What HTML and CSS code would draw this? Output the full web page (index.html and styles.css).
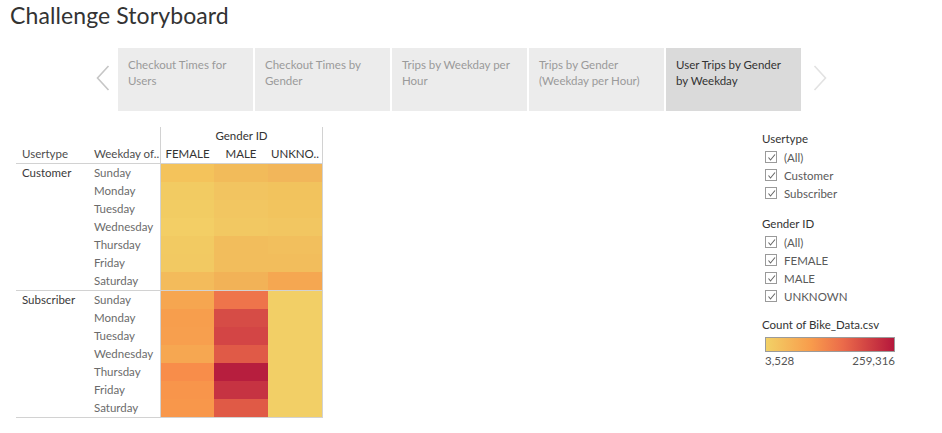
FILE: index.html
```html
<!DOCTYPE html>
<html>
<head>
<meta charset="utf-8">
<link rel="stylesheet" href="styles.css">
</head>
<body>
<h1 class="title">Challenge Storyboard</h1>
<div class="nav">
  <div class="arrow arrow-left">
    <svg width="14" height="26" viewBox="0 0 14 26"><polyline points="12.5,1 1.5,13 12.5,25" fill="none" stroke="#c6c6c6" stroke-width="1.6"/></svg>
  </div>
  <div class="tab">Checkout Times for Users</div>
  <div class="tab">Checkout Times by Gender</div>
  <div class="tab">Trips by Weekday per Hour</div>
  <div class="tab">Trips by Gender (Weekday per Hour)</div>
  <div class="tab active">User Trips by Gender by Weekday</div>
  <div class="arrow arrow-right">
    <svg width="14" height="26" viewBox="0 0 14 26"><polyline points="1.5,1 12.5,13 1.5,25" fill="none" stroke="#e2e2e2" stroke-width="1.6"/></svg>
  </div>
</div>
<div class="content">
  <div class="pivot">
    <div class="labels">
      <div class="lhead">
        <div class="lh lh-user">Usertype</div>
        <div class="lh lh-day">Weekday of..</div>
      </div>
      <div class="group">
        <div class="gname">Customer</div>
        <div class="days">
          <div class="day">Sunday</div><div class="day">Monday</div><div class="day">Tuesday</div><div class="day">Wednesday</div><div class="day">Thursday</div><div class="day">Friday</div><div class="day">Saturday</div>
        </div>
      </div>
      <div class="group">
        <div class="gname">Subscriber</div>
        <div class="days">
          <div class="day">Sunday</div><div class="day">Monday</div><div class="day">Tuesday</div><div class="day">Wednesday</div><div class="day">Thursday</div><div class="day">Friday</div><div class="day">Saturday</div>
        </div>
      </div>
    </div>
    <div class="heat">
      <div class="hhead">
        <div class="hh-title">Gender ID</div>
        <div class="hh-cols"><div class="hc">FEMALE</div><div class="hc">MALE</div><div class="hc">UNKNO..</div></div>
      </div>
      <div class="hgroup">
        <div class="hcol">
          <div class="cell" style="background:#f4c35b"></div>
          <div class="cell" style="background:#f2cb62"></div>
          <div class="cell" style="background:#f2cc63"></div>
          <div class="cell" style="background:#f3ce65"></div>
          <div class="cell" style="background:#f2ca62"></div>
          <div class="cell" style="background:#f2c962"></div>
          <div class="cell" style="background:#f3bb5b"></div>
        </div>
        <div class="hcol">
          <div class="cell" style="background:#f2bb5a"></div>
          <div class="cell" style="background:#f2c460"></div>
          <div class="cell" style="background:#f2c661"></div>
          <div class="cell" style="background:#f2c862"></div>
          <div class="cell" style="background:#f2bd5c"></div>
          <div class="cell" style="background:#f2bd5c"></div>
          <div class="cell" style="background:#f2b257"></div>
        </div>
        <div class="hcol">
          <div class="cell" style="background:#f2b65a"></div>
          <div class="cell" style="background:#f2c35d"></div>
          <div class="cell" style="background:#f2c45e"></div>
          <div class="cell" style="background:#f2c661"></div>
          <div class="cell" style="background:#f2bf5d"></div>
          <div class="cell" style="background:#f2bd5c"></div>
          <div class="cell" style="background:#f5a751"></div>
        </div>
      </div>
      <div class="hgroup">
        <div class="hcol">
          <div class="cell" style="background:#f6a650"></div>
          <div class="cell" style="background:#f79e4d"></div>
          <div class="cell" style="background:#f79f4e"></div>
          <div class="cell" style="background:#f6a751"></div>
          <div class="cell" style="background:#f88d4a"></div>
          <div class="cell" style="background:#f8954b"></div>
          <div class="cell" style="background:#f8974b"></div>
        </div>
        <div class="hcol">
          <div class="cell" style="background:#ee744b"></div>
          <div class="cell" style="background:#d64c46"></div>
          <div class="cell" style="background:#d34545"></div>
          <div class="cell" style="background:#e05a47"></div>
          <div class="cell" style="background:#b71e3e"></div>
          <div class="cell" style="background:#c63342"></div>
          <div class="cell" style="background:#e05a46"></div>
        </div>
        <div class="hcol">
          <div class="cell span7" style="background:#f2cf66"></div>
        </div>
      </div>
    </div>
  </div>
  <div class="legend">
    <div class="ltitle">Usertype</div>
    <div class="chk"><span class="box"><svg width="9" height="9" viewBox="0 0 9 9"><polyline points="1.5,4.5 3.5,7 8,1.5" fill="none" stroke="#666" stroke-width="1.1"/></svg></span>(All)</div>
    <div class="chk"><span class="box"><svg width="9" height="9" viewBox="0 0 9 9"><polyline points="1.5,4.5 3.5,7 8,1.5" fill="none" stroke="#666" stroke-width="1.1"/></svg></span>Customer</div>
    <div class="chk"><span class="box"><svg width="9" height="9" viewBox="0 0 9 9"><polyline points="1.5,4.5 3.5,7 8,1.5" fill="none" stroke="#666" stroke-width="1.1"/></svg></span>Subscriber</div>
    <div class="ltitle sec">Gender ID</div>
    <div class="chk"><span class="box"><svg width="9" height="9" viewBox="0 0 9 9"><polyline points="1.5,4.5 3.5,7 8,1.5" fill="none" stroke="#666" stroke-width="1.1"/></svg></span>(All)</div>
    <div class="chk"><span class="box"><svg width="9" height="9" viewBox="0 0 9 9"><polyline points="1.5,4.5 3.5,7 8,1.5" fill="none" stroke="#666" stroke-width="1.1"/></svg></span>FEMALE</div>
    <div class="chk"><span class="box"><svg width="9" height="9" viewBox="0 0 9 9"><polyline points="1.5,4.5 3.5,7 8,1.5" fill="none" stroke="#666" stroke-width="1.1"/></svg></span>MALE</div>
    <div class="chk"><span class="box"><svg width="9" height="9" viewBox="0 0 9 9"><polyline points="1.5,4.5 3.5,7 8,1.5" fill="none" stroke="#666" stroke-width="1.1"/></svg></span>UNKNOWN</div>
    <div class="ltitle sec2">Count of Bike_Data.csv</div>
    <div class="ramp"></div>
    <div class="ramp-labels"><span>3,528</span><span>259,316</span></div>
  </div>
</div>
</body>
</html>
```

FILE: styles.css
```css
* { box-sizing: border-box; }
html, body { margin: 0; padding: 0; background: #fff; }
body {
  font-family: Lato, "Open Sans", sans-serif;
  font-size: 11.5px;
  color: #333;
  width: 942px;
  height: 433px;
  overflow: hidden;
}
.title {
  margin: 0;
  height: 48px;
  padding-left: 10px;
  font-size: 23px;
  line-height: 31px;
  font-weight: normal;
  color: #333;
  letter-spacing: 0.1px;
}
.nav {
  display: flex;
  height: 63px;
  padding-left: 90px;
  gap: 2px;
}
.arrow {
  width: 26px;
  display: flex;
  align-items: center;
  justify-content: center;
  padding-bottom: 3px;
}
.arrow-right { width: 24px; justify-content: flex-end; }
.tab {
  width: 135px;
  background: #ececec;
  color: #9a9a9a;
  padding: 9px 10px 0 10px;
  line-height: 16px;
}
.tab.active { background: #dadada; color: #333; }

.content {
  display: flex;
  margin-top: 16px;
}
.pivot {
  display: flex;
  margin-left: 16px;
}
.labels { width: 144px; }
.lhead {
  height: 37px;
  border-bottom: 1px solid #d2d2d2;
  display: flex;
  align-items: flex-end;
}
.lh {
  height: 18px;
  line-height: 18px;
  padding-left: 6px;
  color: #4d4d4d;
  white-space: nowrap;
  overflow: hidden;
}
.lh-user { width: 72px; }
.lh-day { width: 72px; padding-right: 1px; }
.group {
  display: flex;
  border-bottom: 1px solid #d2d2d2;
}
.gname {
  width: 72px;
  padding-left: 6px;
  line-height: 18px;
  color: #3a3a3a;
}
.days { width: 72px; }
.day {
  height: 18px;
  line-height: 18px;
  padding-left: 6px;
  color: #6b6b6b;
  white-space: nowrap;
}
.heat {
  width: 163px;
  border-left: 1px solid #d2d2d2;
  border-right: 1px solid #d2d2d2;
}
.hhead {
  height: 37px;
  border-bottom: 1px solid #d2d2d2;
}
.hh-title {
  height: 18px;
  line-height: 18px;
  text-align: center;
  color: #333;
}
.hh-cols { display: flex; }
.hc {
  height: 18px;
  line-height: 18px;
  text-align: center;
  color: #333;
  width: 54px;
  white-space: nowrap;
}
.hc:first-child { width: 53px; }
.hgroup {
  display: flex;
  border-bottom: 1px solid #d2d2d2;
}
.hcol { width: 54px; display: flex; flex-direction: column; }
.hcol:first-child { width: 53px; }
.cell { height: 18px; }
.cell.span7 { height: 126px; }

.legend {
  margin-left: auto;
  width: 180px;
  padding-top: 3px;
}
.ltitle {
  height: 18px;
  line-height: 18px;
  color: #333;
}
.ltitle.sec { margin-top: 13px; }
.ltitle.sec2 { margin-top: 11px; }
.chk {
  height: 18px;
  display: flex;
  align-items: center;
  padding-left: 3px;
  color: #5a5a5a;
}
.box {
  width: 12px;
  height: 12px;
  border: 1px solid #9a9a9a;
  margin-right: 7px;
  display: flex;
  align-items: center;
  justify-content: center;
  background: #fff;
}
.ramp {
  margin-top: 3px;
  margin-left: 3px;
  width: 130px;
  height: 15px;
  border: 1px solid #9b9b9b;
  background: linear-gradient(to right, #f2d166 0%, #f89c4c 35%, #eb6b4a 60%, #b5173c 100%);
}
.ramp-labels {
  width: 130px;
  margin-left: 3px;
  display: flex;
  justify-content: space-between;
  height: 18px;
  line-height: 18px;
  color: #555;
}
```
